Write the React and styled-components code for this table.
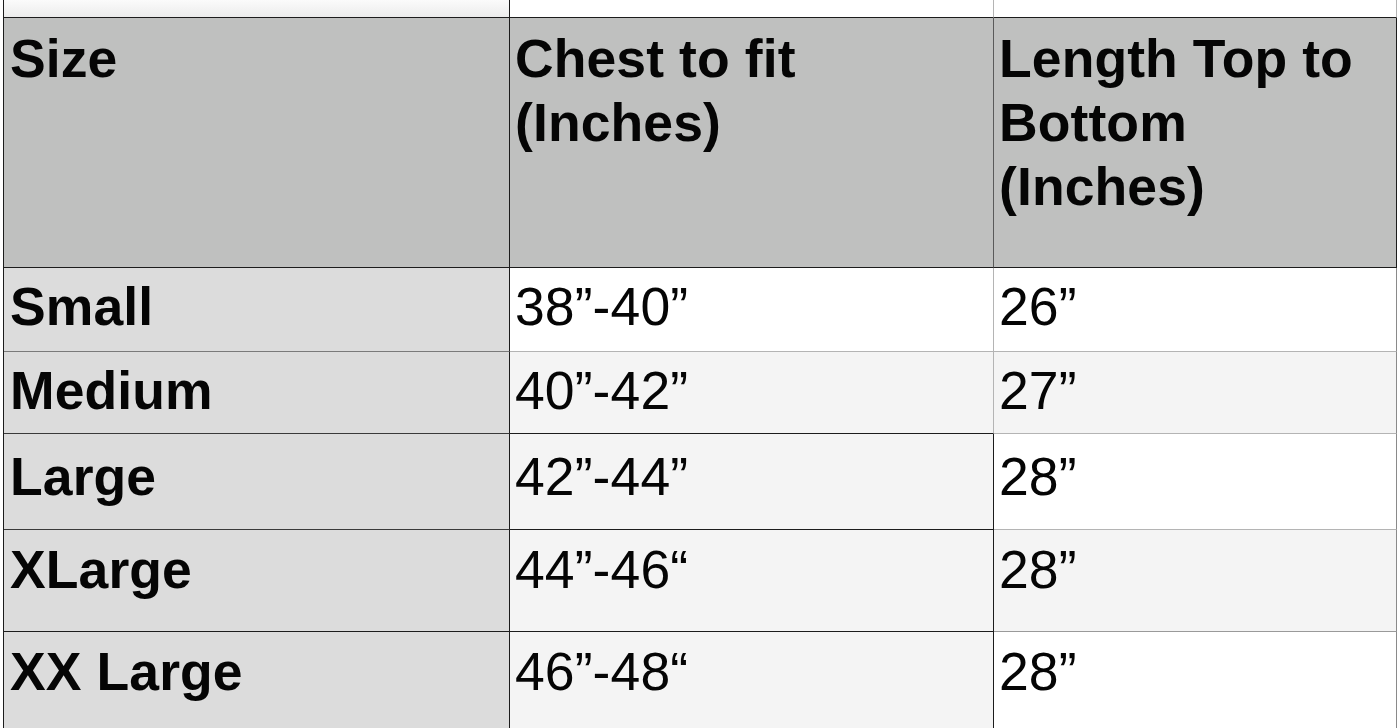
import React from "react";
import styled, { createGlobalStyle } from "styled-components";

const GlobalStyle = createGlobalStyle`
  html, body {
    margin: 0;
    padding: 0;
    background: #ffffff;
  }
  body {
    font-family: "Liberation Sans", Arial, Helvetica, sans-serif;
    color: #050505;
  }
`;

const DARK = "#1c1c1c";
const MID = "#7a7a7a";
const LIGHT = "#b4b4b4";

const Page = styled.div`
  width: 1400px;
  height: 728px;
  overflow: hidden;
  background: #fff;
`;

const Sheet = styled.div`
  display: grid;
  grid-template-columns: 506px 484px 403px;
  grid-template-rows: 18px 250px 84px 82px 96px 102px 100px;
  margin-left: 3px;
  border-left: 1px solid ${DARK};
  width: max-content;
`;

const Cell = styled.div`
  box-sizing: border-box;
  background: ${(p) => p.$bg || "#fff"};
  border-right: 1px solid ${(p) => p.$right || LIGHT};
  border-bottom: 1px solid ${(p) => p.$bottom || LIGHT};
  padding: ${(p) => p.$pt || 0}px 0 0 ${(p) => p.$pl || 5}px;
  font-size: 53.5px;
  line-height: 64px;
  font-weight: ${(p) => (p.$bold ? 700 : 400)};
  letter-spacing: 0.1px;
  white-space: nowrap;
`;

const StripCell = styled(Cell)`
  background: ${(p) =>
    p.$shade ? "linear-gradient(#fbfbfb, #ececec)" : "#fff"};
  padding: 0;
`;

const headers = [
  { lines: ["Size"], right: DARK, pl: 6 },
  { lines: ["Chest to fit", "(Inches)"], right: "#5a5a5a" },
  { lines: ["Length Top to", "Bottom", "(Inches)"], right: DARK },
];

const rows = [
  {
    size: "Small",
    chest: "38”-40”",
    length: "26”",
    pt: 7,
    bg: ["#dcdcdc", "#ffffff", "#ffffff"],
    bottom: [MID, LIGHT, LIGHT],
    chestRight: LIGHT,
  },
  {
    size: "Medium",
    chest: "40”-42”",
    length: "27”",
    pt: 7,
    bg: ["#dcdcdc", "#f4f4f4", "#f4f4f4"],
    bottom: ["#3a3a3a", DARK, LIGHT],
    chestRight: LIGHT,
  },
  {
    size: "Large",
    chest: "42”-44”",
    length: "28”",
    pt: 11,
    bg: ["#dcdcdc", "#f4f4f4", "#ffffff"],
    bottom: ["#3a3a3a", DARK, LIGHT],
    chestRight: DARK,
  },
  {
    size: "XLarge",
    chest: "44”-46“",
    length: "28”",
    pt: 8,
    bg: ["#dcdcdc", "#f4f4f4", "#f4f4f4"],
    bottom: [DARK, DARK, "#9a9a9a"],
    chestRight: DARK,
  },
  {
    size: "XX Large",
    chest: "46”-48“",
    length: "28”",
    pt: 8,
    bg: ["#dcdcdc", "#f4f4f4", "#ffffff"],
    bottom: [DARK, DARK, LIGHT],
    chestRight: DARK,
  },
];

export default function App() {
  return (
    <Page>
      <GlobalStyle />
      <Sheet>
        <StripCell $shade $right={DARK} $bottom={DARK} />
        <StripCell $right={LIGHT} $bottom={DARK} />
        <StripCell $right={LIGHT} $bottom={DARK} />

        {headers.map((h, i) => (
          <Cell
            key={i}
            $bg="#bfc0bf"
            $bold
            $right={h.right}
            $bottom={DARK}
            $pt={9}
            $pl={h.pl || 5}
          >
            {h.lines.map((l, j) => (
              <div key={j}>{l}</div>
            ))}
          </Cell>
        ))}

        {rows.map((r) => (
          <React.Fragment key={r.size}>
            <Cell
              $bg={r.bg[0]}
              $bold
              $right={DARK}
              $bottom={r.bottom[0]}
              $pt={r.pt}
              $pl={6}
            >
              {r.size}
            </Cell>
            <Cell
              $bg={r.bg[1]}
              $right={r.chestRight}
              $bottom={r.bottom[1]}
              $pt={r.pt}
            >
              {r.chest}
            </Cell>
            <Cell
              $bg={r.bg[2]}
              $right="#8a8a8a"
              $bottom={r.bottom[2]}
              $pt={r.pt}
            >
              {r.length}
            </Cell>
          </React.Fragment>
        ))}
      </Sheet>
    </Page>
  );
}
